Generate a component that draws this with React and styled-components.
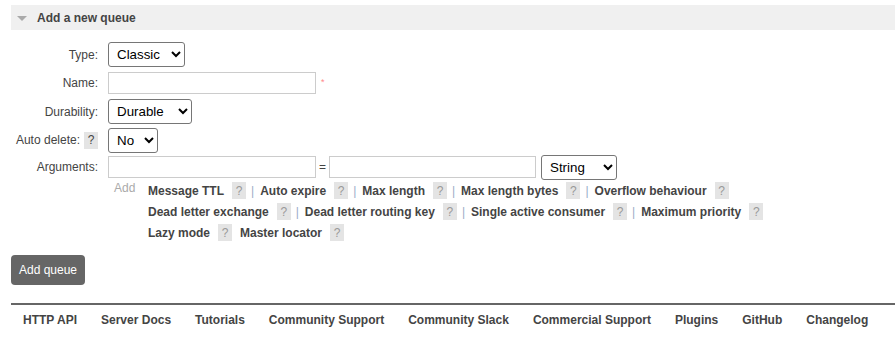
import React from 'react';
import styled, { createGlobalStyle } from 'styled-components';

const GlobalStyle = createGlobalStyle`
	body {
		margin: 0;
		background: #fff;
		font-family: "Liberation Sans", Arial, sans-serif;
		font-size: 12px;
		color: #444;
	}
`

const argLinks = [
	['Message TTL', 'Auto expire', 'Max length', 'Max length bytes', 'Overflow behaviour'],
	['Dead letter exchange', 'Dead letter routing key', 'Single active consumer', 'Maximum priority'],
	['Lazy mode', 'Master locator'],
]

const footerLinks = ['HTTP API', 'Server Docs', 'Tutorials', 'Community Support', 'Community Slack', 'Commercial Support', 'Plugins', 'GitHub', 'Changelog']

const App = () => {
	return (
		<Page>
			<GlobalStyle />
			<SectionHeader>
				<Arrow />
				<HeaderTitle>Add a new queue</HeaderTitle>
			</SectionHeader>

			<Form>
				<Row h={29}>
					<Label>Type:</Label>
					<Select w={77}>
						<option>Classic</option>
						<option>Quorum</option>
					</Select>
				</Row>
				<Row h={28}>
					<Label>Name:</Label>
					<TextInput w={208} />
					<Required>*</Required>
				</Row>
				<Row h={29}>
					<Label>Durability:</Label>
					<Select w={84}>
						<option>Durable</option>
						<option>Transient</option>
					</Select>
				</Row>
				<Row h={28}>
					<Label>Auto delete: <Help dark>?</Help></Label>
					<Select w={50}>
						<option>No</option>
						<option>Yes</option>
					</Select>
				</Row>
				<Row h={26}>
					<Label>Arguments:</Label>
					<TextInput w={208} />
					<Equals>=</Equals>
					<TextInput w={207} />
					<Select w={76} style={{ marginLeft: 5 }}>
						<option>String</option>
						<option>Number</option>
						<option>Boolean</option>
						<option>List</option>
					</Select>
				</Row>
				<ArgHelp>
					<AddText>Add</AddText>
					<LinkBlock>
						{argLinks.map((line, i) => (
							<LinkLine key={i}>
								{line.map((l, j) => {
									const last = j === line.length - 1
									const piped = !last && i < 2
									return (
										<React.Fragment key={l}>
											<ArgLink>{l}</ArgLink>
											<Help spaced={!last && !piped}>?</Help>
											{piped && <Pipe>|</Pipe>}
										</React.Fragment>
									)
								})}
							</LinkLine>
						))}
					</LinkBlock>
				</ArgHelp>
			</Form>

			<AddButton>Add queue</AddButton>

			<Footer>
				{footerLinks.map(f => (
					<FooterLink key={f}>{f}</FooterLink>
				))}
			</Footer>
		</Page>
	);
}

const Page = styled.div`
	padding: 5px 0 0 11px;
`

const SectionHeader = styled.div`
	background: #f0f0f0;
	height: 25px;
	display: flex;
	align-items: center;
	padding-left: 6px;
`

const Arrow = styled.span`
	width: 0;
	height: 0;
	border-left: 5px solid transparent;
	border-right: 5px solid transparent;
	border-top: 5px solid #aaa;
	margin-right: 10px;
	margin-top: 1px;
`

const HeaderTitle = styled.span`
	font-weight: bold;
	font-size: 12px;
	color: #444;
`

const Form = styled.div`
	margin-top: 10px;
`

const Row = styled.div`
	display: flex;
	align-items: center;
	height: ${p => p.h}px;
`

const Label = styled.div`
	width: 97px;
	margin: 0 10px 0 -10px;
	font-size: 12px;
	color: #444;
	display: flex;
	justify-content: flex-end;
	align-items: center;
	gap: 4px;
	white-space: nowrap;
`

const Select = styled.select`
	width: ${p => p.w}px;
	height: 25px;
	font-family: "Liberation Sans", Arial, sans-serif;
	font-size: 13.33px;
	color: #000;
	border: 1px solid #767676;
	border-radius: 3px;
	background: #fff;
	padding: 0 2px 0 4px;
	box-sizing: border-box;
`

const TextInput = styled.input`
	width: ${p => p.w}px;
	height: 22px;
	box-sizing: border-box;
	border: 1px solid #ccc;
	border-radius: 0;
	padding: 2px 4px;
	font-family: "Liberation Sans", Arial, sans-serif;
	font-size: 12px;
`

const Required = styled.span`
	color: #f88;
	font-size: 9px;
	margin-left: 5px;
	align-self: flex-start;
	margin-top: 8px;
`

const Equals = styled.span`
	font-size: 12px;
	color: #444;
	margin: 0 3px 0 3px;
`

const ArgHelp = styled.div`
	display: flex;
	padding-left: 103px;
	margin-top: 0;
`

const AddText = styled.span`
	color: #aaa;
	font-size: 12px;
	width: 34px;
	line-height: 21px;
	margin-top: -2px;
`

const LinkBlock = styled.div`
	display: flex;
	flex-direction: column;
`

const LinkLine = styled.div`
	display: flex;
	align-items: center;
	height: 21px;
`

const ArgLink = styled.span`
	font-weight: bold;
	font-size: 12px;
	color: #444;
	margin-right: 8px;
`

const Help = styled.span`
	display: inline-flex;
	align-items: center;
	justify-content: center;
	width: 14px;
	height: 17px;
	background: #e4e4e4;
	color: ${p => p.dark ? '#444' : '#999'};
	font-size: 12px;
	font-weight: normal;
	margin-right: ${p => p.spaced ? 8 : 0}px;
`

const Pipe = styled.span`
	color: #99acc8;
	margin: 0 6px 0 5px;
	font-size: 12px;
`

const AddButton = styled.button`
	margin-top: 12px;
	height: 30px;
	width: 74px;
	background: #666;
	color: #fff;
	border: none;
	border-radius: 4px;
	font-family: "Liberation Sans", Arial, sans-serif;
	font-size: 12px;
	padding: 0;
`

const Footer = styled.div`
	margin-top: 18px;
	border-top: 2px solid #666;
	display: flex;
	padding-top: 8px;
`

const FooterLink = styled.span`
	font-weight: bold;
	font-size: 12px;
	color: #444;
	padding: 0 12px;
`

export default App;
